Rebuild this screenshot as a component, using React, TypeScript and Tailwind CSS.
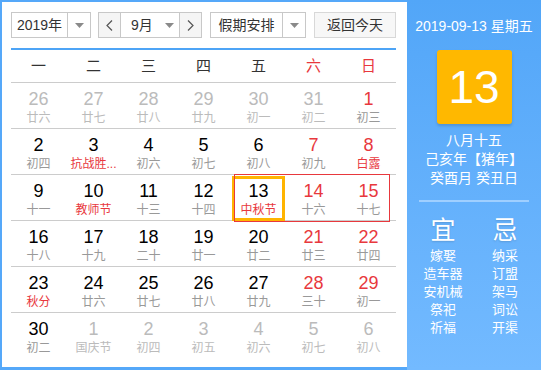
import React from "react";

type Cell = { d: string; l: string; dc: string; lc: string };

const G = "#bbbbbb";
const L = "#999999";
const K = "#000000";
const R = "#e8383d";

const rows: Cell[][] = [
  [
    { d: "26", l: "廿六", dc: G, lc: G },
    { d: "27", l: "廿七", dc: G, lc: G },
    { d: "28", l: "廿八", dc: G, lc: G },
    { d: "29", l: "廿九", dc: G, lc: G },
    { d: "30", l: "初一", dc: G, lc: G },
    { d: "31", l: "初二", dc: G, lc: G },
    { d: "1", l: "初三", dc: R, lc: L },
  ],
  [
    { d: "2", l: "初四", dc: K, lc: L },
    { d: "3", l: "抗战胜...", dc: K, lc: R },
    { d: "4", l: "初六", dc: K, lc: L },
    { d: "5", l: "初七", dc: K, lc: L },
    { d: "6", l: "初八", dc: K, lc: L },
    { d: "7", l: "初九", dc: R, lc: L },
    { d: "8", l: "白露", dc: R, lc: R },
  ],
  [
    { d: "9", l: "十一", dc: K, lc: L },
    { d: "10", l: "教师节", dc: K, lc: R },
    { d: "11", l: "十三", dc: K, lc: L },
    { d: "12", l: "十四", dc: K, lc: L },
    { d: "13", l: "中秋节", dc: K, lc: R },
    { d: "14", l: "十六", dc: R, lc: L },
    { d: "15", l: "十七", dc: R, lc: L },
  ],
  [
    { d: "16", l: "十八", dc: K, lc: L },
    { d: "17", l: "十九", dc: K, lc: L },
    { d: "18", l: "二十", dc: K, lc: L },
    { d: "19", l: "廿一", dc: K, lc: L },
    { d: "20", l: "廿二", dc: K, lc: L },
    { d: "21", l: "廿三", dc: R, lc: L },
    { d: "22", l: "廿四", dc: R, lc: L },
  ],
  [
    { d: "23", l: "秋分", dc: K, lc: R },
    { d: "24", l: "廿六", dc: K, lc: L },
    { d: "25", l: "廿七", dc: K, lc: L },
    { d: "26", l: "廿八", dc: K, lc: L },
    { d: "27", l: "廿九", dc: K, lc: L },
    { d: "28", l: "三十", dc: R, lc: L },
    { d: "29", l: "初一", dc: R, lc: L },
  ],
  [
    { d: "30", l: "初二", dc: K, lc: L },
    { d: "1", l: "国庆节", dc: G, lc: G },
    { d: "2", l: "初四", dc: G, lc: G },
    { d: "3", l: "初五", dc: G, lc: G },
    { d: "4", l: "初六", dc: G, lc: G },
    { d: "5", l: "初七", dc: G, lc: G },
    { d: "6", l: "初八", dc: G, lc: G },
  ],
];

const weekdays = ["一", "二", "三", "四", "五", "六", "日"];

function Tri() {
  return (
    <svg width="9" height="5" viewBox="0 0 9 5">
      <path d="M0 0 L9 0 L4.5 5 Z" fill="#8a8a8a" />
    </svg>
  );
}

export default function App() {
  const font = { fontFamily: '"Liberation Sans", "Noto Sans CJK SC", sans-serif' };
  return (
    <div className="w-[541px] h-[370px] flex bg-[#55a8f9] pt-[2px] pb-[3px] pl-[2px]" style={font}>
      <div className="w-[405px] h-full bg-white pl-[9px] pr-[11px] pt-[10px]">
        {/* toolbar */}
        <div className="flex items-center h-[26px] text-[14px] text-[#333]">
          <div className="flex w-[80px] h-[26px] border border-[#c8c8c8]">
            <div className="w-[55px] flex items-center justify-center">2019年</div>
            <div className="flex-1 flex items-center justify-center border-l border-[#c8c8c8]">
              <Tri />
            </div>
          </div>
          <div className="flex ml-[7px] w-[104px] h-[26px] border border-[#c8c8c8]">
            <div className="w-[22px] flex items-center justify-center bg-[#f5f5f5] border-r border-[#c8c8c8] text-[#666]">
              <svg width="7" height="11" viewBox="0 0 7 11"><path d="M6 0.5 L1 5.5 L6 10.5" stroke="#555" strokeWidth="1.2" fill="none" /></svg>
            </div>
            <div className="flex-1 flex items-center pl-[10px] pr-[5px]">
              <span className="flex-1">9月</span>
              <Tri />
            </div>
            <div className="w-[22px] flex items-center justify-center bg-[#f5f5f5] border-l border-[#c8c8c8]">
              <svg width="7" height="11" viewBox="0 0 7 11"><path d="M1 0.5 L6 5.5 L1 10.5" stroke="#555" strokeWidth="1.2" fill="none" /></svg>
            </div>
          </div>
          <div className="flex ml-[8px] w-[96px] h-[26px] border border-[#c8c8c8]">
            <div className="w-[71px] flex items-center justify-center">假期安排</div>
            <div className="flex-1 flex items-center justify-center border-l border-[#c8c8c8]">
              <Tri />
            </div>
          </div>
          <div className="ml-[8px] w-[82px] h-[26px] flex items-center justify-center bg-[#f7f7f7] border border-[#d8d8d8]">
            返回今天
          </div>
        </div>
        {/* blue line */}
        <div className="mt-[10px] h-[2px] bg-[#4da4f6]" />
        {/* weekday header */}
        <div className="grid grid-cols-7 h-[33px] items-center border-b border-[#cccccc] text-[15px]">
          {weekdays.map((w, i) => (
            <div key={w} className={"text-center " + (i >= 5 ? "text-[#e8383d]" : "text-[#333]")}>
              {w}
            </div>
          ))}
        </div>
        {/* rows */}
        {rows.map((row, ri) => (
          <div
            key={ri}
            className={"relative grid grid-cols-7 h-[46px] " + (ri < rows.length - 1 ? "border-b border-[#cccccc]" : "")}
          >
            {row.map((c, ci) => (
              <div key={ci} className="relative flex flex-col items-center pt-[5px]">
                <div className="text-[18px] leading-[22px]" style={{ color: c.dc }}>
                  {c.d}
                </div>
                <div className="text-[12px] leading-[16px] whitespace-nowrap" style={{ color: c.lc }}>
                  {c.l}
                </div>
                {ri === 2 && ci === 4 && (
                  <div className="absolute left-[1px] top-[1px] w-[53px] h-[45px] border-[3px] border-[#ffb400] pointer-events-none" />
                )}
              </div>
            ))}
            {ri === 2 && (
              <div className="absolute left-[223px] top-[-1px] w-[156px] h-[48px] border border-[#e8383d] pointer-events-none" />
            )}
          </div>
        ))}
      </div>
      {/* right panel */}
      <div className="flex-1 h-[calc(100%+5px)] -mt-[2px] -mb-[3px] bg-gradient-to-b from-[#52a6f8] to-[#73baff] flex flex-col items-center text-white">
        <div className="mt-[17px] text-[14px] leading-[18px]">2019-09-13 星期五</div>
        <div className="mt-[15px] w-[75px] h-[74px] rounded-[3px] bg-[#ffb800] shadow-[0_2px_3px_rgba(0,0,0,0.15)] flex items-center justify-center">
          <span className="text-[46px] leading-none" style={{ fontFamily: '"Liberation Sans", Arial, sans-serif' }}>13</span>
        </div>
        <div className="mt-[7px] text-[14px] leading-[19px]">八月十五</div>
        <div className="text-[14px] leading-[19px]">己亥年【猪年】</div>
        <div className="text-[14px] leading-[19px]">癸酉月 癸丑日</div>
        <div className="mt-[12px] w-[110px] h-[2px] bg-[#9fcfff]" />
        <div className="mt-[14px] flex gap-[22px]">
          <div className="flex flex-col items-center w-[40px]">
            <div className="text-[25px] leading-[28px] [text-shadow:0_1px_2px_rgba(0,0,0,0.15)]">宜</div>
            <div className="mt-[3px] text-[13px] leading-[18px] flex flex-col items-center">
              <span>嫁娶</span>
              <span>造车器</span>
              <span>安机械</span>
              <span>祭祀</span>
              <span>祈福</span>
            </div>
          </div>
          <div className="flex flex-col items-center w-[40px]">
            <div className="text-[25px] leading-[28px] [text-shadow:0_1px_2px_rgba(0,0,0,0.15)]">忌</div>
            <div className="mt-[3px] text-[13px] leading-[18px] flex flex-col items-center">
              <span>纳采</span>
              <span>订盟</span>
              <span>架马</span>
              <span>词讼</span>
              <span>开渠</span>
            </div>
          </div>
        </div>
      </div>
    </div>
  );
}
